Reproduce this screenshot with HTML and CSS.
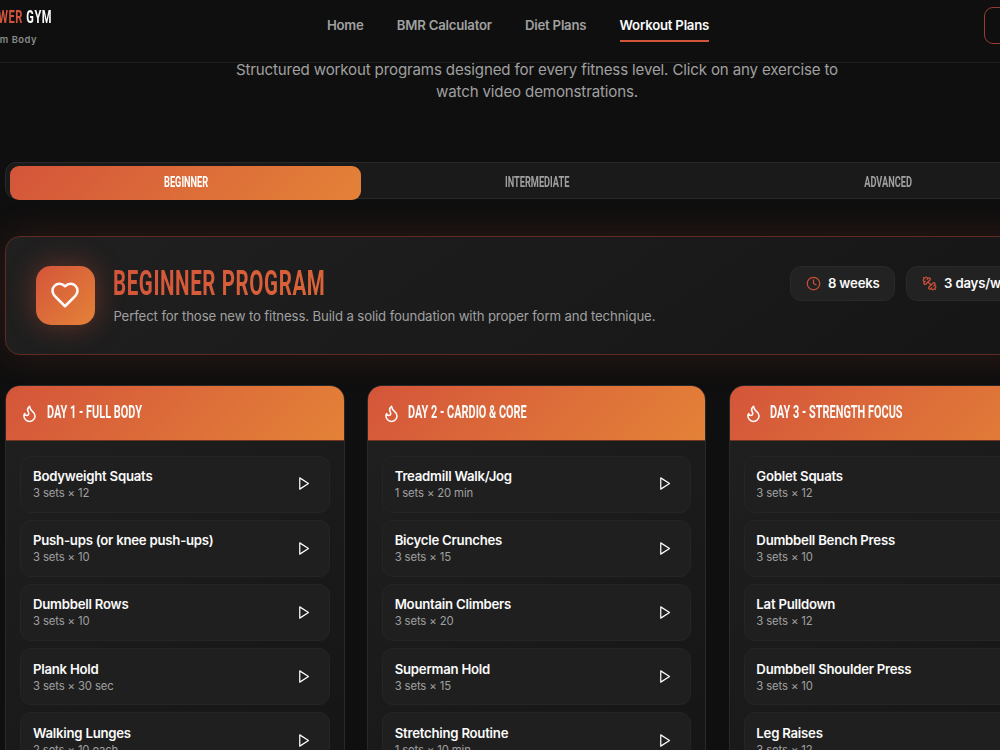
FILE: index.html
```html
<!DOCTYPE html>
<html lang="en">
<head>
    <meta charset="UTF-8">
    <meta name="viewport" content="width=device-width, initial-scale=1.0">
    <title>Workout Plans - Power Gym</title>
    <link rel="stylesheet" href="styles.css">
</head>
<body>
    <!-- Shared icons -->
    <svg class="sprite" width="0" height="0">
        <symbol id="flame" viewBox="0 0 24 24"><path d="M8.5 14.5A2.5 2.5 0 0 0 11 12c0-1.38-.5-2-1-3-1.072-2.143-.224-4.054 2-6 .5 2.5 2 4.9 4 6.5 2 1.6 3 3.5 3 5.5a7 7 0 1 1-14 0c0-1.153.433-2.294 1-3a2.5 2.5 0 0 0 2.5 2.5z"/></symbol>
        <symbol id="play" viewBox="0 0 24 24"><polygon points="6 3 20 12 6 21 6 3"/></symbol>
        <symbol id="heart" viewBox="0 0 24 24"><path d="M19 14c1.49-1.46 3-3.21 3-5.5A5.5 5.5 0 0 0 16.5 3c-1.76 0-3 .5-4.5 2-1.5-1.5-2.74-2-4.5-2A5.5 5.5 0 0 0 2 8.5c0 2.3 1.5 4.05 3 5.5l7 7Z"/></symbol>
        <symbol id="clock" viewBox="0 0 24 24"><circle cx="12" cy="12" r="10"/><polyline points="12 6 12 12 16 14"/></symbol>
        <symbol id="dumbbell" viewBox="0 0 24 24"><path d="M14.4 14.4 9.6 9.6"/><path d="M18.657 21.485a2 2 0 1 1-2.829-2.828l-1.767 1.768a2 2 0 1 1-2.829-2.829l6.364-6.364a2 2 0 1 1 2.829 2.829l-1.768 1.767a2 2 0 1 1 2.828 2.829z"/><path d="m21.5 21.5-1.4-1.4"/><path d="M3.9 3.9 2.5 2.5"/><path d="M6.404 12.768a2 2 0 1 1-2.829-2.829l1.768-1.767a2 2 0 1 1-2.828-2.829l2.828-2.828a2 2 0 1 1 2.829 2.828l1.767-1.768a2 2 0 1 1 2.829 2.829z"/></symbol>
    </svg>

    <div class="page">
        <header class="header">
            <div class="logo">
                <div class="logo-name"><span class="accent">POWER</span> GYM</div>
                <div class="logo-tagline">Dream Body</div>
            </div>
            <nav class="nav">
                <a>Home</a>
                <a>BMR Calculator</a>
                <a>Diet Plans</a>
                <a class="active">Workout Plans</a>
            </nav>
            <div class="header-action"></div>
        </header>

        <main class="main">
            <p class="intro">Structured workout programs designed for every fitness level. Click on any exercise to<br>watch video demonstrations.</p>

            <div class="tabs">
                <div class="tab active"><span>BEGINNER</span></div>
                <div class="tab"><span>INTERMEDIATE</span></div>
                <div class="tab"><span>ADVANCED</span></div>
            </div>

            <section class="program">
                <div class="program-icon"><svg class="icon"><use href="#heart"/></svg></div>
                <div class="program-text">
                    <h2>BEGINNER PROGRAM</h2>
                    <p>Perfect for those new to fitness. Build a solid foundation with proper form and technique.</p>
                </div>
                <div class="program-stats">
                    <div class="stat"><svg class="icon"><use href="#clock"/></svg>8 weeks</div>
                    <div class="stat"><svg class="icon"><use href="#dumbbell"/></svg>3 days/week</div>
                </div>
            </section>

            <section class="days" id="days"></section>
        </main>
    </div>

    <script>
        const days = [
            { title: 'DAY 1 - FULL BODY', exercises: [
                ['Bodyweight Squats', '3 sets × 12'],
                ['Push-ups (or knee push-ups)', '3 sets × 10'],
                ['Dumbbell Rows', '3 sets × 10'],
                ['Plank Hold', '3 sets × 30 sec'],
                ['Walking Lunges', '2 sets × 10 each']
            ] },
            { title: 'DAY 2 - CARDIO & CORE', exercises: [
                ['Treadmill Walk/Jog', '1 sets × 20 min'],
                ['Bicycle Crunches', '3 sets × 15'],
                ['Mountain Climbers', '3 sets × 20'],
                ['Superman Hold', '3 sets × 15'],
                ['Stretching Routine', '1 sets × 10 min']
            ] },
            { title: 'DAY 3 - STRENGTH FOCUS', exercises: [
                ['Goblet Squats', '3 sets × 12'],
                ['Dumbbell Bench Press', '3 sets × 10'],
                ['Lat Pulldown', '3 sets × 12'],
                ['Dumbbell Shoulder Press', '3 sets × 10'],
                ['Leg Raises', '3 sets × 12']
            ] }
        ];

        document.getElementById('days').innerHTML = days.map(day => `
            <article class="day">
                <div class="day-header"><svg class="icon"><use href="#flame"/></svg><h3>${day.title.replace('&', '&amp;')}</h3></div>
                <div class="day-body">
                    ${day.exercises.map(([name, sets]) => `
                        <div class="exercise">
                            <div>
                                <div class="exercise-name">${name}</div>
                                <div class="exercise-sets">${sets}</div>
                            </div>
                            <svg class="icon"><use href="#play"/></svg>
                        </div>`).join('')}
                </div>
            </article>`).join('');
    </script>
</body>
</html>
```
FILE: styles.css
```css
* {
    margin: 0;
    padding: 0;
    box-sizing: border-box;
}

html {
    overflow: hidden;
}

body {
    width: 100%;
    height: 750px;
    overflow: hidden;
    background: #0f0f0f;
    color: #fafafa;
    font-family: Inter, sans-serif;
    letter-spacing: -0.12px;
}

.sprite {
    display: none;
}

.icon {
    flex: none;
    width: 15px;
    height: 15px;
    fill: none;
    stroke: currentColor;
    stroke-width: 2;
    stroke-linecap: round;
    stroke-linejoin: round;
}

.page {
    width: 1074px;
}

/* Header */
.header {
    display: flex;
    justify-content: space-between;
    height: 63px;
    border-bottom: 1px solid #1e1e1e;
}

.logo {
    display: flex;
    flex-direction: column;
    align-items: flex-end;
    width: 52px;
    padding-top: 7px;
}

.logo-name {
    font-family: Roboto, sans-serif;
    font-size: 18.5px;
    font-weight: 700;
    letter-spacing: 0.9px;
    line-height: 21px;
    white-space: nowrap;
    transform: scaleX(0.6);
    transform-origin: right;
}

.accent {
    color: #d2553b;
}

.logo-tagline {
    padding: 5px 15px 0 0;
    color: #8c8c8c;
    font-size: 9.4px;
    font-weight: 600;
    letter-spacing: 0.5px;
    line-height: 13px;
    white-space: nowrap;
}

.nav {
    display: flex;
    gap: 33.2px;
}

.nav a {
    height: 42px;
    padding-top: 16px;
    color: #a0a0a0;
    font-size: 13.2px;
    font-weight: 600;
    letter-spacing: -0.22px;
    line-height: 19px;
}

.nav .active {
    border-bottom: 2px solid #d2553b;
    color: #fafafa;
}

.header-action {
    width: 90px;
    height: 37px;
    margin-top: 7px;
    border: 1px solid #963e2b;
    border-radius: 9px;
}

/* Intro and level tabs */
.main {
    padding: 0 5px;
}

.intro {
    height: 98px;
    margin-top: -4px;
    color: #a0a0a0;
    font-size: 15.1px;
    letter-spacing: -0.155px;
    line-height: 22px;
    text-align: center;
}

.tabs {
    display: flex;
    height: 37px;
    margin-top: 5px;
    padding: 3px 4px 0;
    background: #1a1a1a;
    border: 1px solid #292929;
    border-radius: 11px;
}

.tab {
    flex: 1;
    height: 34px;
    border-radius: 9px;
    color: #a0a0a0;
    font-family: Roboto, sans-serif;
    font-size: 15.5px;
    font-weight: 700;
    letter-spacing: 0;
    line-height: 32px;
    text-align: center;
}

.tab span {
    display: inline-block;
    transform: scaleX(0.595);
}

.tab.active {
    background: linear-gradient(135deg, #d4553a, #e48238);
    color: #fff;
}

/* Program banner */
.program {
    display: flex;
    height: 119px;
    margin-top: 37px;
    padding: 29px 30px;
    background: linear-gradient(145deg, #202020, #151515);
    border: 1px solid #602b22;
    border-radius: 15px;
    box-shadow: 0 0 38px rgba(214, 84, 58, 0.15);
}

.program-icon {
    display: flex;
    flex: none;
    align-items: center;
    justify-content: center;
    width: 59px;
    height: 59px;
    background: linear-gradient(135deg, #d4553a, #e48238);
    border-radius: 15px;
    box-shadow: 0 0 28px rgba(214, 84, 58, 0.4);
}

.program-icon .icon {
    width: 30px;
    height: 30px;
    margin: 0 1px 1px 0;
}

.program-text {
    flex: none;
    width: 676px;
    padding-left: 18.4px;
}

.program h2 {
    width: max-content;
    background: linear-gradient(135deg, #d4553a 0%, #da6439 100%);
    background-clip: text;
    color: transparent;
    font-family: Roboto, sans-serif;
    font-size: 34.5px;
    font-weight: 700;
    letter-spacing: 1px;
    line-height: 34px;
    transform: scaleX(0.595);
    transform-origin: left;
}

.program p {
    margin-top: 7px;
    color: #a0a0a0;
    font-size: 13.2px;
    line-height: 19px;
}

.program-stats {
    display: flex;
    gap: 11px;
    margin-left: 19px;
}

.stat {
    display: flex;
    flex: none;
    align-items: center;
    gap: 7px;
    height: 35px;
    padding: 0 14.5px 1px 15px;
    background: #222;
    border: 1px solid #292929;
    border-radius: 11px;
    font-size: 13.2px;
    font-weight: 600;
    letter-spacing: -0.2px;
}

.stat .icon {
    color: #c84f38;
}

/* Day cards */
.days {
    display: grid;
    grid-template-columns: repeat(3, 339.5px);
    gap: 22.2px;
    margin-top: 30px;
    padding-left: 0.3px;
}

.day {
    overflow: hidden;
    background: linear-gradient(145deg, #202020, #151515);
    border: 1px solid #292929;
    border-radius: 15px;
}

.day-header {
    display: flex;
    align-items: center;
    gap: 7.5px;
    height: 55px;
    padding: 0 14px;
    background: linear-gradient(135deg, #d4553a, #e48238);
    border-bottom: 1px solid #70351f;
}

.day-header .icon {
    width: 19px;
    height: 19px;
}

.day-header h3 {
    margin-top: -3px;
    font-family: Roboto, sans-serif;
    font-size: 18.5px;
    font-weight: 700;
    letter-spacing: 0;
    white-space: nowrap;
    transform: scaleX(0.59);
    transform-origin: left;
}

.day-body {
    display: grid;
    gap: 7.2px;
    padding: 14.6px 14px;
}

.exercise {
    display: flex;
    align-items: center;
    justify-content: space-between;
    height: 57px;
    padding: 0 18px 0.3px 11.7px;
    background: #1f1f1f;
    border: 1px solid #252525;
    border-radius: 11px;
}

.exercise-name {
    font-size: 13.2px;
    font-weight: 600;
    letter-spacing: -0.24px;
    line-height: 19px;
}

.exercise-sets {
    color: #a0a0a0;
    font-size: 11.3px;
    line-height: 15px;
}
```
